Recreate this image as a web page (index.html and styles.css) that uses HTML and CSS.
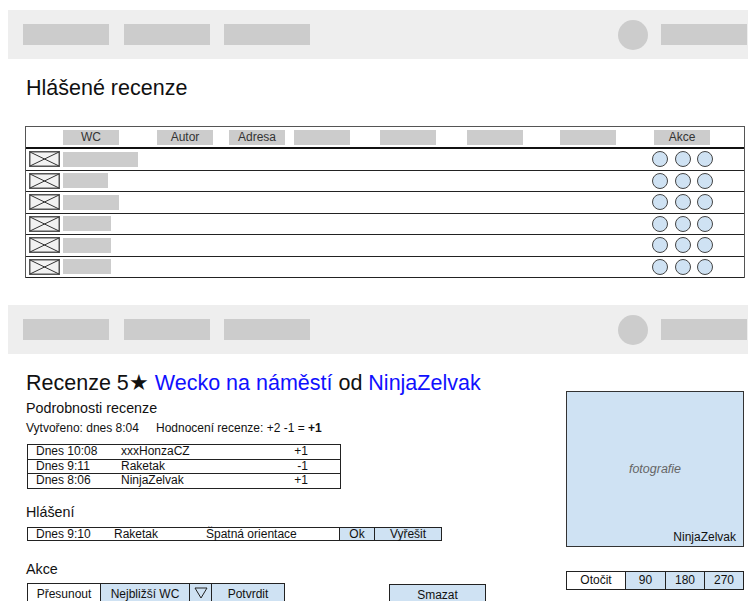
FILE: index.html
```html
<!DOCTYPE html>
<html lang="cs">
<head>
<meta charset="utf-8">
<title>Hlášené recenze</title>
<link rel="stylesheet" href="styles.css">
</head>
<body>
  <header class="navbar">
    <span class="nav-item"></span>
    <span class="nav-item"></span>
    <span class="nav-item"></span>
    <span class="nav-avatar"></span>
    <span class="nav-item nav-user"></span>
  </header>

  <h1 class="page-title">Hlášené recenze</h1>

  <section class="review-table">
    <div class="review-head">
      <span class="head-blank"></span>
      <span class="head-cell">WC</span>
      <span class="head-cell">Autor</span>
      <span class="head-cell">Adresa</span>
      <span class="head-cell"></span>
      <span class="head-cell"></span>
      <span class="head-cell"></span>
      <span class="head-cell"></span>
      <span class="head-cell">Akce</span>
    </div>
    <div class="review-row">
      <svg class="thumb" viewBox="0 0 31 16"><rect x="0.75" y="0.75" width="29.5" height="14.5"/><path d="M1 1L30 15M1 15L30 1"/></svg>
      <span class="ph ph-xl"></span>
      <span class="row-actions"><i></i><i></i><i></i></span>
    </div>
    <div class="review-row">
      <svg class="thumb" viewBox="0 0 31 16"><rect x="0.75" y="0.75" width="29.5" height="14.5"/><path d="M1 1L30 15M1 15L30 1"/></svg>
      <span class="ph ph-s"></span>
      <span class="row-actions"><i></i><i></i><i></i></span>
    </div>
    <div class="review-row">
      <svg class="thumb" viewBox="0 0 31 16"><rect x="0.75" y="0.75" width="29.5" height="14.5"/><path d="M1 1L30 15M1 15L30 1"/></svg>
      <span class="ph ph-l"></span>
      <span class="row-actions"><i></i><i></i><i></i></span>
    </div>
    <div class="review-row">
      <svg class="thumb" viewBox="0 0 31 16"><rect x="0.75" y="0.75" width="29.5" height="14.5"/><path d="M1 1L30 15M1 15L30 1"/></svg>
      <span class="ph ph-m"></span>
      <span class="row-actions"><i></i><i></i><i></i></span>
    </div>
    <div class="review-row">
      <svg class="thumb" viewBox="0 0 31 16"><rect x="0.75" y="0.75" width="29.5" height="14.5"/><path d="M1 1L30 15M1 15L30 1"/></svg>
      <span class="ph ph-m"></span>
      <span class="row-actions"><i></i><i></i><i></i></span>
    </div>
    <div class="review-row">
      <svg class="thumb" viewBox="0 0 31 16"><rect x="0.75" y="0.75" width="29.5" height="14.5"/><path d="M1 1L30 15M1 15L30 1"/></svg>
      <span class="ph ph-m"></span>
      <span class="row-actions"><i></i><i></i><i></i></span>
    </div>
  </section>

  <header class="navbar navbar-second">
    <span class="nav-item"></span>
    <span class="nav-item"></span>
    <span class="nav-item"></span>
    <span class="nav-avatar"></span>
    <span class="nav-item nav-user"></span>
  </header>

  <main class="detail">
    <div class="detail-main">
      <h2 class="detail-title">Recenze 5<span class="star">★</span> <a class="link">Wecko na náměstí</a> od <a class="link">NinjaZelvak</a></h2>
      <h3 class="sub-title">Podrobnosti recenze</h3>
      <p class="meta"><span>Vytvořeno: dnes 8:04</span><span class="meta-score">Hodnocení recenze: +2 -1 = <b>+1</b></span></p>

      <div class="votes">
        <div class="vote"><span class="v-date">Dnes 10:08</span><span class="v-user">xxxHonzaCZ</span><span class="v-score">+1</span></div>
        <div class="vote"><span class="v-date">Dnes 9:11</span><span class="v-user">Raketak</span><span class="v-score">-1</span></div>
        <div class="vote"><span class="v-date">Dnes 8:06</span><span class="v-user">NinjaZelvak</span><span class="v-score">+1</span></div>
      </div>

      <h3 class="sub-title sub-report">Hlášení</h3>
      <div class="report">
        <div class="report-info">
          <span class="r-date">Dnes 9:10</span>
          <span class="r-user">Raketak</span>
          <span class="r-reason">Špatná orientace</span>
        </div>
        <button class="btn btn-blue btn-ok">Ok</button>
        <button class="btn btn-blue btn-solve">Vyřešit</button>
      </div>

      <h3 class="sub-title sub-actions">Akce</h3>
      <div class="actions">
        <button class="btn btn-move">Přesunout</button>
        <button class="btn btn-blue btn-nearest">Nejbližší WC</button>
        <button class="btn btn-blue btn-drop"><svg viewBox="0 0 14 12"><path d="M1 1H13L7 11Z"/></svg></button>
        <button class="btn btn-blue btn-confirm">Potvrdit</button>
        <button class="btn btn-blue btn-delete">Smazat</button>
      </div>
    </div>

    <aside class="media">
      <div class="photo">
        <span class="photo-label">fotografie</span>
        <span class="photo-author">NinjaZelvak</span>
      </div>
      <div class="rotate">
        <span class="rot-cell rot-label">Otočit</span>
        <span class="rot-cell rot-90">90</span>
        <span class="rot-cell rot-180">180</span>
        <span class="rot-cell rot-270">270</span>
      </div>
    </aside>
  </main>
</body>
</html>
```

FILE: styles.css
```css
html, body {
  overflow: hidden;
}

body {
  margin: 0;
  padding: 10px 0 0 8px;
  font-family: "Liberation Sans", Arial, sans-serif;
  color: #111;
  background: #fff;
}

/* top navigation placeholder */
.navbar {
  display: flex;
  align-items: center;
  height: 49px;
  padding: 0 1px 0 15px;
  background: #eeeeee;
}

.nav-item {
  width: 86px;
  height: 21px;
  background: #cccccc;
}

.nav-item + .nav-item {
  margin-left: 15px;
}

.nav-item + .nav-item + .nav-item {
  margin-left: 14px;
}

.nav-avatar {
  width: 30px;
  height: 30px;
  margin-left: auto;
  margin-right: 13px;
  border-radius: 50%;
  background: #cccccc;
}

.nav-item.nav-user {
  margin-left: 0;
}

.navbar-second {
  margin-top: 27px;
}

/* page heading */
.page-title {
  margin: 17px 0 0 18px;
  font-size: 21.5px;
  line-height: 25px;
  font-weight: normal;
  color: #111;
}

/* reported reviews table */
.review-table {
  margin: 25px 3px 0 17px;
  border: 1px solid #555;
  border-bottom: none;
  font-size: 12px;
}

.review-head {
  display: grid;
  grid-template-columns: 37px 94px 72px 65px 86px 87px 93px 94px 1fr;
  height: 22px;
  padding-top: 3px;
  box-sizing: border-box;
  border-bottom: 2px solid #111;
}

.head-cell {
  width: 56px;
  height: 15px;
  line-height: 15px;
  text-align: center;
  background: #cccccc;
  color: #333;
}

.review-row {
  display: flex;
  align-items: center;
  height: 20.5px;
  padding-left: 3px;
  border-bottom: 1px solid #222;
}

.thumb {
  width: 31px;
  height: 16px;
  flex: none;
}

.thumb rect {
  fill: #f2f2f2;
  stroke: #555;
  stroke-width: 1.5;
}

.thumb path {
  fill: none;
  stroke: #333;
  stroke-width: 1;
}

.ph {
  height: 15px;
  margin-left: 3px;
  background: #cccccc;
}

.ph-xl { width: 75px; }
.ph-l { width: 56px; }
.ph-m { width: 48px; }
.ph-s { width: 45px; }

.row-actions {
  display: flex;
  gap: 6.5px;
  margin-left: auto;
  margin-right: 31px;
}

.row-actions i {
  width: 16px;
  height: 16px;
  box-sizing: border-box;
  border: 1px solid #444;
  border-radius: 50%;
  background: #cfe2f3;
}

/* review detail */
.detail {
  display: flex;
  align-items: flex-start;
  padding-left: 18px;
}

.detail-main {
  flex: 1;
}

.detail-title {
  margin: 16px 0 0;
  font-size: 21.5px;
  line-height: 26px;
  font-weight: normal;
  color: #111;
  white-space: nowrap;
}

.star {
  display: inline-block;
  line-height: 1;
}

.link {
  color: #1010ff;
  text-decoration: none;
}

.sub-title {
  margin: 4px 0 0;
  font-size: 14.3px;
  line-height: 17px;
  font-weight: normal;
  color: #111;
}

.meta {
  display: flex;
  margin: 4px 0 0;
  font-size: 12px;
  line-height: 14px;
  color: #111;
}

.meta-score {
  margin-left: 17px;
}

.meta b {
  font-weight: bold;
}

.votes {
  width: 312px;
  margin: 9px 0 0 1px;
  border: 1px solid #222;
  font-size: 12px;
}

.vote {
  display: flex;
  height: 13.5px;
  line-height: 13.5px;
  padding: 0 32px 0 8px;
}

.vote + .vote {
  border-top: 1px solid #222;
}

.v-date {
  width: 85px;
}

.v-user {
  flex: 1;
}

.v-score {
  text-align: right;
}

.sub-report {
  margin-top: 15px;
}

.report {
  display: flex;
  margin: 6px 0 0 1px;
  font-size: 12px;
}

.report-info {
  display: flex;
  width: 313px;
  box-sizing: border-box;
  height: 14px;
  line-height: 12px;
  padding-left: 8px;
  border: 1px solid #222;
}

.r-date {
  width: 78px;
}

.r-user {
  width: 92px;
}

/* buttons */
.btn {
  margin: 0;
  padding: 0;
  box-sizing: border-box;
  font-family: inherit;
  font-size: 12px;
  color: #111;
  background: #fff;
  border: 1px solid #222;
  text-align: center;
}

.btn-blue {
  background: #cfe2f3;
}

.btn-ok {
  width: 35px;
  height: 14px;
  line-height: 12px;
  border-left: none;
}

.btn-solve {
  width: 67px;
  height: 14px;
  line-height: 12px;
  border-left: none;
}

.sub-actions {
  margin-top: 20px;
}

.actions {
  display: flex;
  align-items: flex-start;
  margin: 5px 0 0 1px;
}

.actions .btn {
  height: 22px;
  line-height: 20px;
}

.btn-move {
  width: 74px;
}

.btn-nearest {
  width: 89px;
  border-left: none;
}

.btn-drop {
  display: flex;
  align-items: flex-start;
  justify-content: center;
  width: 22px;
  border-left: none;
  padding-top: 3px;
}

.btn-drop svg {
  width: 14px;
  height: 12px;
}

.btn-drop path {
  fill: none;
  stroke: #222;
  stroke-width: 1;
}

.btn-confirm {
  width: 73px;
  border-left: none;
}

.actions .btn-delete {
  width: 97px;
  margin: 1px 0 0 104px;
}

/* photo column */
.media {
  width: 178px;
  margin: 37px 4px 0 0;
  flex: none;
}

.photo {
  position: relative;
  display: flex;
  align-items: center;
  justify-content: center;
  height: 156px;
  box-sizing: border-box;
  border: 1px solid #333;
  background: #cfe2f3;
}

.photo-label {
  font-size: 12.5px;
  font-style: italic;
  color: #666;
}

.photo-author {
  position: absolute;
  right: 7px;
  bottom: 2px;
  font-size: 12px;
  line-height: 14px;
  color: #111;
}

.rotate {
  display: flex;
  margin-top: 24px;
  font-size: 12px;
}

.rot-cell {
  height: 19px;
  line-height: 17px;
  box-sizing: border-box;
  text-align: center;
  border: 1px solid #222;
  border-left: none;
  background: #cfe2f3;
}

.rot-label {
  width: 60px;
  border-left: 1px solid #222;
  background: #fff;
}

.rot-90 { width: 40px; }
.rot-180 { width: 39px; }
.rot-270 { width: 39px; }
```
